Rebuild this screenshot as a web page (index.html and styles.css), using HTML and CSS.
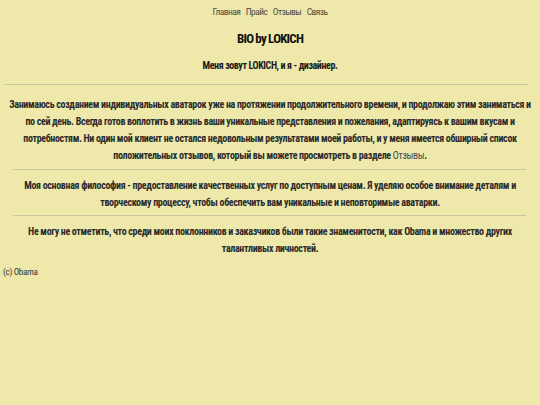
FILE: index.html
```html
<!DOCTYPE html>
<html lang="ru">
<head>
<meta charset="utf-8">
<title>BIO by LOKICH</title>
<link rel="stylesheet" href="styles.css">
</head>
<body>
<nav class="nav">
  <a href="#">Главная</a>
  <a href="#">Прайс</a>
  <a href="#">Отзывы</a>
  <a href="#">Связь</a>
</nav>
<h1 class="title">BIO by LOKICH</h1>
<h2 class="subtitle">Меня зовут LOKICH, и я - дизайнер.</h2>
<hr class="rule rule-wide">
<p class="text text-first">Занимаюсь созданием индивидуальных аватарок уже на протяжении продолжительного времени, и продолжаю этим заниматься и по сей день. Всегда готов воплотить в жизнь ваши уникальные представления и пожелания, адаптируясь к вашим вкусам и потребностям. Ни один мой клиент не остался недовольным результатами моей работы, и у меня имеется обширный список положительных отзывов, который вы можете просмотреть в разделе <a class="link" href="#">Отзывы</a>.</p>
<hr class="rule">
<p class="text">Моя основная философия - предоставление качественных услуг по доступным ценам. Я уделяю особое внимание деталям и творческому процессу, чтобы обеспечить вам уникальные и неповторимые аватарки.</p>
<hr class="rule">
<p class="text">Не могу не отметить, что среди моих поклонников и заказчиков были такие знаменитости, как Obama и множество других талантливых личностей.</p>
<footer class="footer">(c) Obama</footer>
</body>
</html>
```
FILE: styles.css
```css
html { background: #eee8aa; }
body {
  margin: 0 3px;
  font-family: "Roboto", "Liberation Sans", sans-serif;
  font-stretch: 75%;
  color: #2b2b2b;
}
.nav {
  display: flex;
  justify-content: center;
  gap: 5.5px;
  padding-top: 5px;
  font-size: 9.5px;
  line-height: 13px;
  letter-spacing: -0.55px;
}
.nav a { color: #4a4a4a; text-decoration: none; }
.title {
  margin: 12px 0 0;
  text-align: center;
  font-size: 13px;
  line-height: 17px;
  letter-spacing: -0.8px;
  color: #111;
}
.subtitle {
  margin: 12px 0 0;
  text-align: center;
  font-size: 10px;
  line-height: 14px;
  letter-spacing: -0.4px;
  color: #1a1a1a;
}
.rule {
  margin: 0 11px 0 10px;
  border: 0;
  border-top: 1px solid #ccc6a0;
  height: 0;
}
.rule-wide {
  margin: 11px 9px 0 1px;
}
.text {
  margin: 7px 5px 4px;
  text-align: center;
  font-weight: bold;
  font-size: 10px;
  line-height: 17px;
  letter-spacing: -0.33px;
}
.text-first { margin-top: 11px; margin-bottom: 5px; }
.link { color: #4a4a4a; font-weight: normal; text-decoration: none; }
.footer {
  margin-top: 10px;
  font-size: 9px;
  line-height: 11px;
  letter-spacing: -0.3px;
  color: #333;
}
```
